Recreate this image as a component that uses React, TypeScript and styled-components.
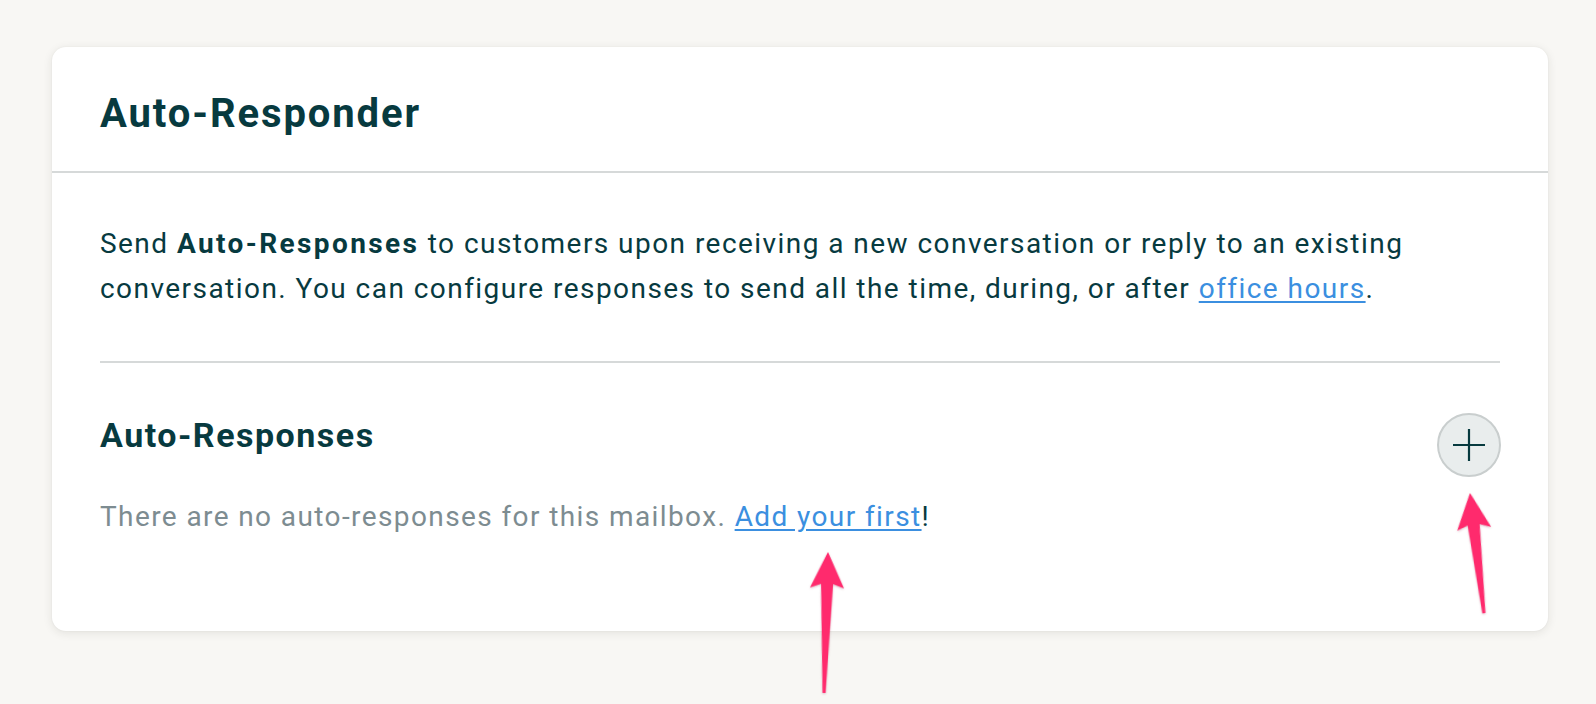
import { FC } from 'react';
import styled, { createGlobalStyle } from 'styled-components';

const GlobalStyle = createGlobalStyle`
  html, body {
    margin: 0;
    padding: 0;
    background: #f8f7f4;
  }

  body {
    font-family: Roboto, "Noto Sans", sans-serif;
    color: #073a3f;
    -webkit-font-smoothing: antialiased;
  }
`;

const Page = styled.div`
  position: relative;
  width: 1596px;
  height: 704px;
  padding: 47px 0 0 52px;
  box-sizing: border-box;
  overflow: hidden;
`;

const Card = styled.section`
  width: 1496px;
  background: #fff;
  border-radius: 14px;
  box-shadow: 0 2px 10px rgba(40, 40, 30, 0.1), 0 0 2px rgba(40, 40, 30, 0.06);
`;

const CardHeader = styled.header`
  box-sizing: border-box;
  height: 126px;
  padding: 43px 48px 0;
  border-bottom: 2px solid #d6d9d9;

  h1 {
    margin: 0;
    font-size: 40px;
    line-height: 48px;
    font-weight: 700;
    letter-spacing: 1.9px;
  }
`;

const CardBody = styled.div`
  padding: 48px 48px 92px;
`;

const Intro = styled.p`
  margin: 0;
  padding-bottom: 50px;
  font-size: 28px;
  line-height: 45px;
  letter-spacing: 1.45px;
  border-bottom: 2px solid #d6d9d9;

  strong {
    font-weight: 700;
    letter-spacing: 2.4px;
  }
`;

const Link = styled.a`
  color: #3b8fe0;
  text-decoration: underline;
  text-underline-offset: 3px;
`;

const SectionRow = styled.div`
  display: flex;
  align-items: flex-start;
  justify-content: space-between;
  margin-top: 50px;

  h2 {
    margin: 2px 0 0;
    font-size: 34px;
    line-height: 40px;
    font-weight: 700;
    letter-spacing: 1.5px;
  }
`;

const AddButton = styled.button`
  width: 64px;
  height: 64px;
  border-radius: 50%;
  border: 2px solid #c9cece;
  background: #e9eded;
  display: flex;
  align-items: center;
  justify-content: center;
  padding: 0;
  margin-right: -1px;
  color: #073a3f;
`;

const Empty = styled.p`
  margin: 17px 0 0;
  font-size: 28px;
  line-height: 45px;
  letter-spacing: 1.4px;
  color: #7d8c91;

  b {
    font-weight: 400;
    color: #073a3f;
  }
`;

const Arrow = styled.svg`
  position: absolute;
  overflow: visible;
  filter: drop-shadow(0 1px 1px rgba(120, 0, 40, 0.25));
`;

interface ArrowProps {
  left: number;
  top: number;
  length: number;
  tilt: number;
}

// annotation arrow, tip at (left + 20, top)
const PinkArrow: FC<ArrowProps> = ({ left, top, length, tilt }) => (
  <Arrow
    width="40"
    height={length}
    viewBox={`0 0 40 ${length}`}
    style={{ left, top, transform: `rotate(${tilt}deg)`, transformOrigin: '20px 0' }}
  >
    <path
      d={`M20 0 L37 36 L26 32 L21.5 ${length} L18.5 ${length} L14 32 L3 36 Z`}
      fill="#ff2a6d"
    />
  </Arrow>
);

export default function App() {
  return (
    <>
      <GlobalStyle />
      <Page>
        <Card>
          <CardHeader>
            <h1>Auto-Responder</h1>
          </CardHeader>
          <CardBody>
            <Intro>
              Send <strong>Auto-Responses</strong> to customers upon receiving a new conversation or reply to an existing
              conversation. You can configure responses to send all the time, during, or after{' '}
              <Link href="#">office hours</Link>.
            </Intro>
            <SectionRow>
              <h2>Auto-Responses</h2>
              <AddButton aria-label="Add auto-response">
                <svg width="34" height="34" viewBox="0 0 34 34">
                  <path d="M17 1v32M1 17h32" stroke="currentColor" strokeWidth="2.2" />
                </svg>
              </AddButton>
            </SectionRow>
            <Empty>
              There are no auto-responses for this mailbox. <Link href="#">Add your first</Link>
              <b>!</b>
            </Empty>
          </CardBody>
        </Card>
        <PinkArrow left={808} top={552} length={141} tilt={1.6} />
        <PinkArrow left={1450} top={493} length={121} tilt={-6.6} />
      </Page>
    </>
  );
}
